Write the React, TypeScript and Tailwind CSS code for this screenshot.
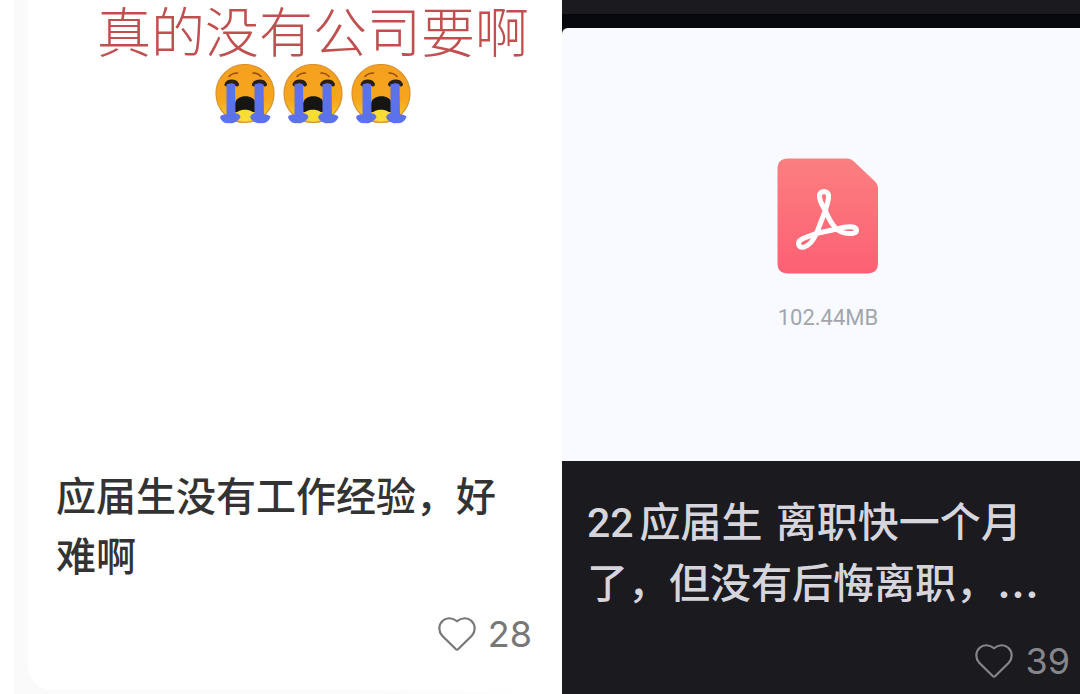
import React from "react";

function CryingFace() {
  return (
    <svg viewBox="0 0 60 60" className="h-[60px] w-[60px]" role="img" aria-label="大哭">
      <defs>
        <linearGradient id="face" x1="0" y1="0" x2="0" y2="1">
          <stop offset="0" stopColor="#f5a01f" />
          <stop offset="0.6" stopColor="#f6a51c" />
          <stop offset="1" stopColor="#fbd12f" />
        </linearGradient>
      </defs>
      <circle cx="30" cy="29.5" r="29" fill="url(#face)" stroke="#d8922f" strokeWidth="1.200" />
      <path d="M14 12.500C16.500 9.500 19 9 22.500 9M38 9C41.500 9 43.500 9.500 46 12.500" fill="none" stroke="#9a4a17" strokeWidth="1.600" strokeLinecap="round" />
      <path d="M11.500 20.500C13 16.500 20.500 16.500 22 20.500M39 20.500C41 16.500 48.500 16.500 50 20.500" fill="none" stroke="#2a2018" strokeWidth="4" strokeLinecap="round" />
      <path d="M20 48V40C20.500 29.500 40.500 29.500 40.500 40V48Z" fill="#17150f" />
      <path d="M20.500 51C22 44 38 44 39.500 51C38 59 22 59 20.500 51Z" fill="#f7dd34" />
      <path d="M11.500 20.500Q16 18.500 20 20.500L20.500 49Q25 50 25.500 53C23 58 18 60 14 59C10 60 6 57 5 53Q6 50 11.500 50.500Z" fill="#5c72ea" />
      <path d="M39.500 20.500Q44 18.500 48.500 20.500L49 50.500Q54 50 55.500 53C54 57 50 60 46 59C42 60 37 58 35 53Q36 50 39.500 49Z" fill="#5c72ea" />
    </svg>
  );
}

function HeartIcon() {
  return (
    <svg viewBox="0 0 38 34" className="h-[34px] w-[38px]" fill="none" stroke="currentColor" strokeWidth="2.200" strokeLinejoin="round" aria-hidden="true">
      <path d="M19 4.300C14.500 0.300 8.500 0.300 4.700 3.800C0.300 8 0.300 14.500 4.200 18.700L17.700 32Q19 33.200 20.300 32L33.800 18.700C37.700 14.500 37.700 8 33.300 3.800C29.500 0.300 23.500 0.300 19 4.300Z" />
    </svg>
  );
}

function PdfIcon() {
  return (
    <svg viewBox="0 0 102 116" className="h-[116px] w-[102px]" role="img" aria-label="PDF">
      <defs>
        <linearGradient id="pdf" x1="0" y1="0" x2="0" y2="1">
          <stop offset="0" stopColor="#fb7f80" />
          <stop offset="1" stopColor="#fd6074" />
        </linearGradient>
      </defs>
      <path d="M11 0.500H70Q74 0.500 77 3.500L98 23.500Q101 26.500 101 31V105Q101 115.500 90 115.500H11Q0.500 115.500 0.500 105V11Q0.500 0.500 11 0.500Z" fill="url(#pdf)" />
      <path
        d="M48 52C44.500 46 42 42 42.500 37.500C43 32 51 32 51.500 37.500C52 42 50 46 48.500 52L39.500 75.500C36 83 32 87.500 27.500 89C22 90.500 19.500 85.500 23.500 82C27.500 79 33 78.500 39 75.500L60 71C67 69 72 68 76 69C81 70.500 80.500 75 75.500 75.500C70 76 65 75 60 71.500C54 66 50.500 58 48 52Z"
        fill="none"
        stroke="#fff"
        strokeWidth="5"
        strokeLinejoin="round"
      />
    </svg>
  );
}

function LikeButton({ count, className }: { count: number; className: string }) {
  return (
    <button type="button" aria-label={`点赞 ${count}`} className={`flex items-center gap-3 self-end ${className}`}>
      <HeartIcon />
      <span className="font-['Inter',sans-serif] text-[36px] leading-10">{count}</span>
    </button>
  );
}

export default function App() {
  return (
    <main className="grid min-h-screen grid-cols-[562fr_518fr] bg-white font-['Noto_Sans_CJK_SC',sans-serif]">
      <div className="flex pl-[14px]">
        <article className="flex flex-1 flex-col bg-[linear-gradient(to_right,#fafafa_60%,#ffffff_96%)] pb-1 pl-[14px]">
          <div className="flex flex-1 flex-col rounded-bl-3xl bg-white">
            <div className="flex h-[464px] flex-col items-center pl-9">
              <p className="mb-1 whitespace-nowrap text-[54px] leading-[60px] font-light text-[#c0504f]">真的没有公司要啊</p>
              <div className="flex gap-2">
                <CryingFace />
                <CryingFace />
                <CryingFace />
              </div>
            </div>
            <h2 className="pr-8 pl-7 text-[40px] leading-[60px] font-medium text-[#333333]">应届生没有工作经验，好难啊</h2>
            <LikeButton count={28} className="mt-[30px] mr-[30px] text-[#777777]" />
          </div>
        </article>
      </div>

      <article className="flex flex-col bg-[#1a1a1f]">
        <div className="h-[14px]" />
        <div className="h-[14px] bg-[#08080f]" />
        <div className="flex h-[433px] flex-col items-center rounded-tl-md bg-[#f8faff] pt-[130px] pl-[14px]">
          <PdfIcon />
          <p className="mt-7 font-['Roboto',sans-serif] text-[22px] leading-8 text-[#a3a5aa]">102.44MB</p>
        </div>
        <h2 className="mt-7 mr-3 ml-[25px] text-[41px] leading-[61px] font-medium text-[#d6d5dc]">
          <span className="mr-1.5 font-['Roboto',sans-serif] leading-none">22</span>应届生<span className="ml-1"> 离职快一个月</span>
          <br />
          了，但没有后悔离职，<span className="font-['Inter',sans-serif] text-[46px] leading-none">...</span>
        </h2>
        <LikeButton count={39} className="mt-[30px] mr-[10px] text-[#85868b]" />
      </article>
    </main>
  );
}
